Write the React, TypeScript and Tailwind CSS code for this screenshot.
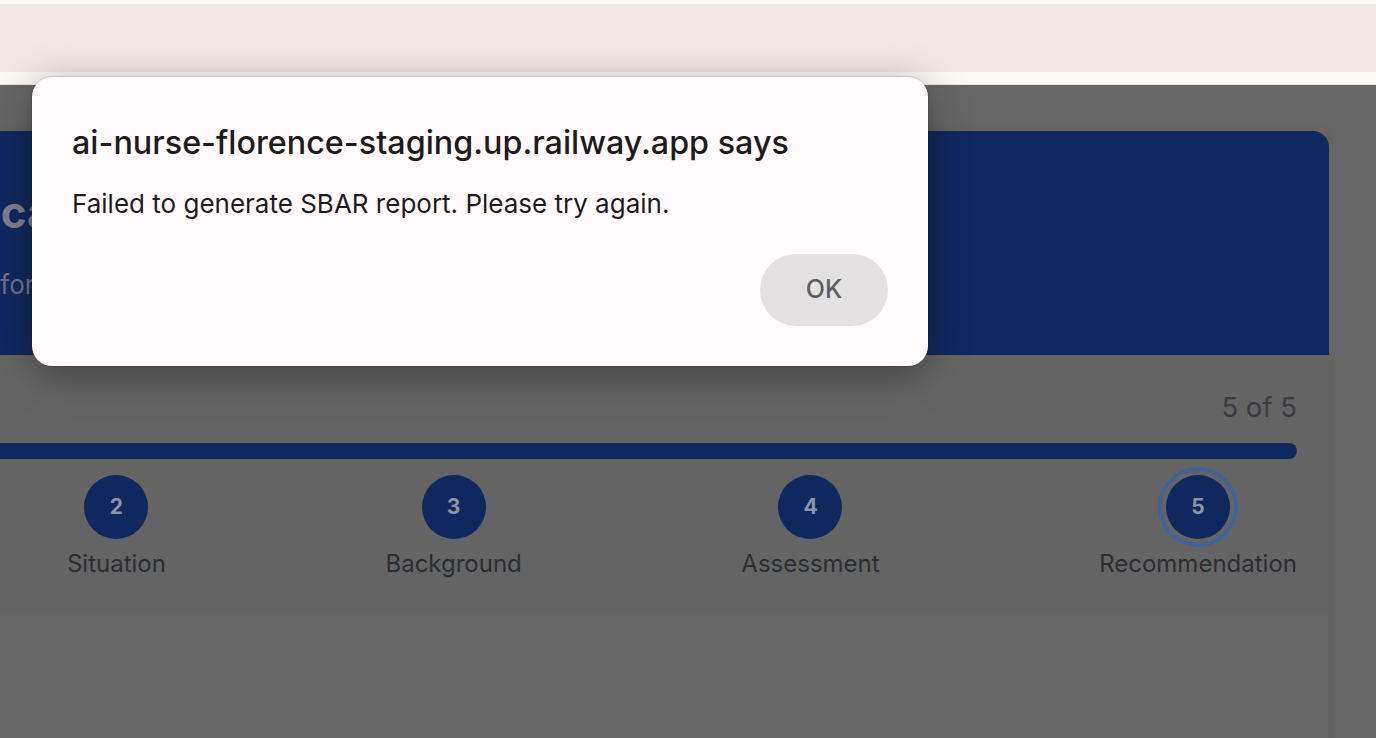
import React from "react";

const steps = [
  { n: 1, label: "Patient Info" },
  { n: 2, label: "Situation" },
  { n: 3, label: "Background" },
  { n: 4, label: "Assessment" },
  { n: 5, label: "Recommendation" },
];

function Step({ n, label, active }: { n: number; label: string; active: boolean }) {
  return (
    <div className="flex flex-col items-center">
      <div
        className={`flex h-16 w-16 items-center justify-center rounded-full bg-[#0f285e] text-[21px] font-bold text-[#8b93a6] ${
          active ? "ring-4 ring-[#3f6399] ring-offset-4 ring-offset-[#646464]" : ""
        }`}
      >
        {n}
      </div>
      <div className="mt-[11px] text-[24px] leading-[28px] text-[#2b2e33]">{label}</div>
    </div>
  );
}

function Browser() {
  return (
    <div className="flex h-[85px] flex-col">
      <div className="h-[4px] bg-[#fdf8f5]" />
      <div className="h-[68px] bg-[#f0e8e4]" />
      <div className="h-[12px] bg-[#fdf8f5]" />
      <div className="h-px bg-[#f1dcd3]" />
    </div>
  );
}

function Alert() {
  return (
    <div className="absolute left-[32px] top-[77px] flex h-[289px] w-[896px] flex-col rounded-[20px] bg-[#fffbfd] px-10 pb-10 pt-[47px] shadow-[0_8px_40px_rgba(0,0,0,0.35)] ring-1 ring-black/10">
      <div className="text-[32.3px] font-medium leading-[38px] text-[#1f1b1c]">
        ai-nurse-florence-staging.up.railway.app says
      </div>
      <div className="mt-[26px] text-[26px] leading-[32px] text-[#1f1b1c]">
        Failed to generate SBAR report. Please try again.
      </div>
      <div className="mt-auto flex justify-end">
        <button className="h-[72px] w-[128px] rounded-full bg-[#e4e1e2] text-[25px] font-medium text-[#5b5e63]">
          OK
        </button>
      </div>
    </div>
  );
}

export default function App() {
  return (
    <div
      className="relative h-[738px] w-[1376px] overflow-hidden bg-[#646464]"
      style={{ fontFamily: "Inter, 'Noto Sans', sans-serif" }}
    >
      <Browser />
      <div className="bg-[#676767] pt-[46px]">
        <div className="ml-[-313px] w-[1642px] overflow-hidden rounded-t-2xl shadow-[0_0_12px_rgba(0,0,0,0.08)]">
          <div className="h-[224px] bg-[#0f285e] pl-[230px] pt-[55px]">
            <h1 className="ml-[-12px] text-[44px] font-bold leading-[52px] text-[#7c8190]">
              Clinical SBAR Report Wizard
            </h1>
            <p className="ml-[10px] mt-[31px] text-[26px] leading-[32px] text-[#6b7390]">
              Tools for structured patient handoff communication
            </p>
          </div>
          <div className="h-[256px] bg-[#646464] px-8 pt-[37px]">
            <div className="flex items-center justify-between text-[27.5px] leading-[30px] text-[#3a3c40]">
              <span>Step 5</span>
              <span>5 of 5</span>
            </div>
            <div className="mt-[21px] h-4 rounded-full bg-[#0f285e]" />
            <div className="mt-4 flex justify-between">
              {steps.map((s) => (
                <Step key={s.n} n={s.n} label={s.label} active={s.n === 5} />
              ))}
            </div>
          </div>
          <div className="h-[200px] bg-[#666666]" />
        </div>
      </div>
      <Alert />
    </div>
  );
}
